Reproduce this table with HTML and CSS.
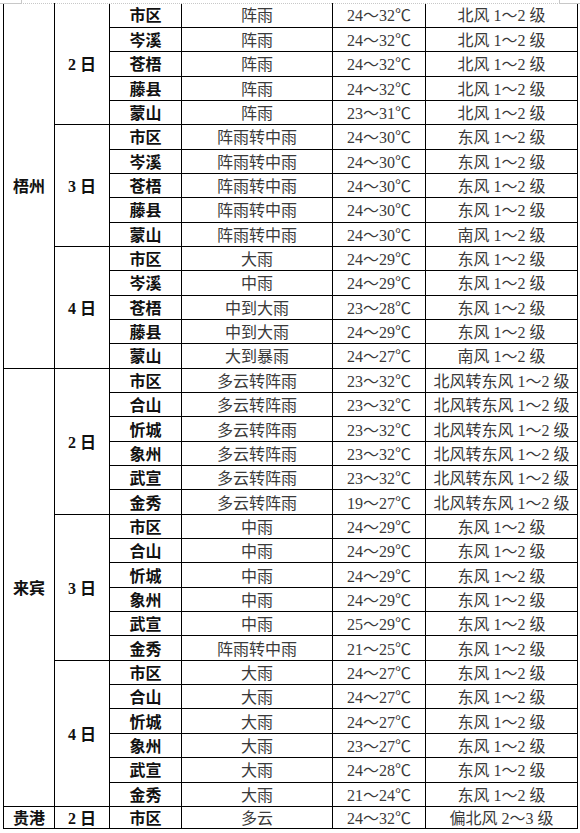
FILE: index.html
```html
<!DOCTYPE html>
<html lang="zh-CN">
<head>
<meta charset="utf-8">
<title>天气预报</title>
<link rel="stylesheet" href="styles.css">
</head>
<body>
<div class="edge"><span class="mark mark-l"></span><span class="mark mark-r"></span></div>
<table class="wx">
<colgroup><col class="c1"><col class="c2"><col class="c3"><col class="c4"><col class="c5"><col class="c6"></colgroup>
<tbody>
<tr><td class="city" rowspan="15">梧州</td><td class="day" rowspan="5">2 日</td><td class="area">市区</td><td>阵雨</td><td>24～32℃</td><td>北风 1～2 级</td></tr>
<tr><td class="area">岑溪</td><td>阵雨</td><td>24～32℃</td><td>北风 1～2 级</td></tr>
<tr><td class="area">苍梧</td><td>阵雨</td><td>24～32℃</td><td>北风 1～2 级</td></tr>
<tr><td class="area">藤县</td><td>阵雨</td><td>24～32℃</td><td>北风 1～2 级</td></tr>
<tr><td class="area">蒙山</td><td>阵雨</td><td>23～31℃</td><td>北风 1～2 级</td></tr>
<tr><td class="day" rowspan="5">3 日</td><td class="area">市区</td><td>阵雨转中雨</td><td>24～30℃</td><td>东风 1～2 级</td></tr>
<tr><td class="area">岑溪</td><td>阵雨转中雨</td><td>24～30℃</td><td>东风 1～2 级</td></tr>
<tr><td class="area">苍梧</td><td>阵雨转中雨</td><td>24～30℃</td><td>东风 1～2 级</td></tr>
<tr><td class="area">藤县</td><td>阵雨转中雨</td><td>24～30℃</td><td>东风 1～2 级</td></tr>
<tr><td class="area">蒙山</td><td>阵雨转中雨</td><td>24～30℃</td><td>南风 1～2 级</td></tr>
<tr><td class="day" rowspan="5">4 日</td><td class="area">市区</td><td>大雨</td><td>24～29℃</td><td>东风 1～2 级</td></tr>
<tr><td class="area">岑溪</td><td>中雨</td><td>24～29℃</td><td>东风 1～2 级</td></tr>
<tr><td class="area">苍梧</td><td>中到大雨</td><td>23～28℃</td><td>东风 1～2 级</td></tr>
<tr><td class="area">藤县</td><td>中到大雨</td><td>24～29℃</td><td>东风 1～2 级</td></tr>
<tr><td class="area">蒙山</td><td>大到暴雨</td><td>24～27℃</td><td>南风 1～2 级</td></tr>
<tr><td class="city" rowspan="18">来宾</td><td class="day" rowspan="6">2 日</td><td class="area">市区</td><td>多云转阵雨</td><td>23～32℃</td><td>北风转东风 1～2 级</td></tr>
<tr><td class="area">合山</td><td>多云转阵雨</td><td>23～32℃</td><td>北风转东风 1～2 级</td></tr>
<tr><td class="area">忻城</td><td>多云转阵雨</td><td>23～32℃</td><td>北风转东风 1～2 级</td></tr>
<tr><td class="area">象州</td><td>多云转阵雨</td><td>23～32℃</td><td>北风转东风 1～2 级</td></tr>
<tr><td class="area">武宣</td><td>多云转阵雨</td><td>23～32℃</td><td>北风转东风 1～2 级</td></tr>
<tr><td class="area">金秀</td><td>多云转阵雨</td><td>19～27℃</td><td>北风转东风 1～2 级</td></tr>
<tr><td class="day" rowspan="6">3 日</td><td class="area">市区</td><td>中雨</td><td>24～29℃</td><td>东风 1～2 级</td></tr>
<tr><td class="area">合山</td><td>中雨</td><td>24～29℃</td><td>东风 1～2 级</td></tr>
<tr><td class="area">忻城</td><td>中雨</td><td>24～29℃</td><td>东风 1～2 级</td></tr>
<tr><td class="area">象州</td><td>中雨</td><td>24～29℃</td><td>东风 1～2 级</td></tr>
<tr><td class="area">武宣</td><td>中雨</td><td>25～29℃</td><td>东风 1～2 级</td></tr>
<tr><td class="area">金秀</td><td>阵雨转中雨</td><td>21～25℃</td><td>东风 1～2 级</td></tr>
<tr><td class="day" rowspan="6">4 日</td><td class="area">市区</td><td>大雨</td><td>24～27℃</td><td>东风 1～2 级</td></tr>
<tr><td class="area">合山</td><td>大雨</td><td>24～27℃</td><td>东风 1～2 级</td></tr>
<tr><td class="area">忻城</td><td>大雨</td><td>24～27℃</td><td>东风 1～2 级</td></tr>
<tr><td class="area">象州</td><td>大雨</td><td>23～27℃</td><td>东风 1～2 级</td></tr>
<tr><td class="area">武宣</td><td>大雨</td><td>24～28℃</td><td>东风 1～2 级</td></tr>
<tr><td class="area">金秀</td><td>大雨</td><td>21～24℃</td><td>东风 1～2 级</td></tr>
<tr class="last"><td class="city">贵港</td><td class="day">2 日</td><td class="area">市区</td><td>多云</td><td>24～32℃</td><td>偏北风 2～3 级</td></tr>
</tbody>
</table>
</body>
</html>
```
FILE: styles.css
```css
html, body {
  margin: 0;
  padding: 0;
  background: #fff;
}
body {
  width: 580px;
  height: 833px;
  overflow: hidden;
  font-family: "Liberation Serif", "Noto Sans CJK SC", serif;
  font-size: 16px;
  color: #3a3a3a;
}
.edge {
  position: relative;
  height: 3px;
  border-bottom: 1px dotted #c8c8c8;
}
.mark {
  position: absolute;
  top: 0;
  height: 3px;
  border-bottom: 1px solid #c8c8c8;
}
.mark-l {
  left: 0;
  width: 21px;
  border-right: 1px solid #c8c8c8;
}
.mark-r {
  right: 0;
  width: 20px;
  border-left: 1px solid #c8c8c8;
}
.wx {
  border-collapse: collapse;
  table-layout: fixed;
  width: 574px;
  margin-left: 3px;
  margin-top: -1px;
}
.c1 { width: 51px; }
.c2 { width: 55px; }
.c3 { width: 72px; }
.c4 { width: 151px; }
.c5 { width: 93px; }
.c6 { width: 152px; }
.wx tr {
  height: 24.35px;
}
.wx tr.last {
  height: 22px;
}
.wx td {
  border: 1px solid #000;
  padding: 3px 0 0;
  text-align: center;
  vertical-align: middle;
  line-height: 16px;
  white-space: nowrap;
}
.wx tr:first-child td {
  border-top: 0;
}
.wx td.city,
.wx td.day,
.wx td.area {
  font-weight: 600;
  color: #111;
}
```
